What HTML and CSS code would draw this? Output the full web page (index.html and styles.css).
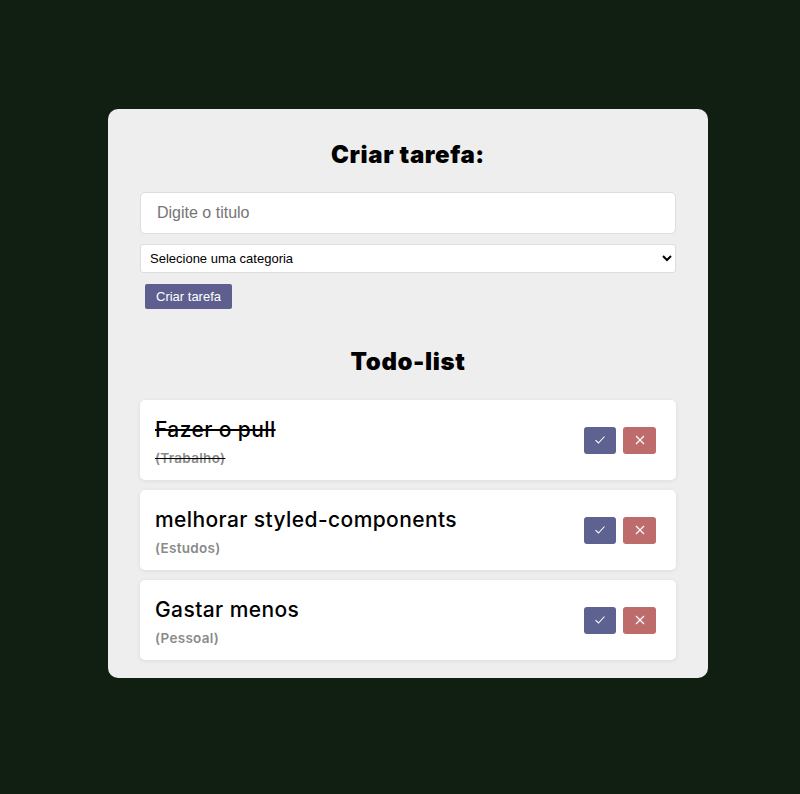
FILE: index.html
```html
<!DOCTYPE html>
<html lang="pt">
<head>
<meta charset="utf-8">
<title>Todo-list</title>
<link rel="stylesheet" href="styles.css">
</head>
<body>
<main class="card">
  <h2 class="title">Criar tarefa:</h2>
  <form class="form">
    <input class="input" type="text" placeholder="Digite o titulo">
    <select class="select">
      <option>Selecione uma categoria</option>
    </select>
    <div class="btn-row"><button type="button" class="create">Criar tarefa</button></div>
  </form>
  <h2 class="title list-title">Todo-list</h2>
  <ul class="list">
    <li class="item done">
      <div class="info">
        <p class="name">Fazer o pull</p>
        <p class="cat">(Trabalho)</p>
      </div>
      <div class="actions">
        <button class="act check" type="button"><svg width="12" height="10" viewBox="0 0 12 10"><path d="M1.5 5.2 L4.5 8 L10.5 1.5" fill="none" stroke="#fff" stroke-width="1.1"/></svg></button>
        <button class="act del" type="button"><svg width="10" height="10" viewBox="0 0 10 10"><path d="M1 1 L9 9 M9 1 L1 9" fill="none" stroke="#fff" stroke-width="1.2"/></svg></button>
      </div>
    </li>
    <li class="item">
      <div class="info">
        <p class="name">melhorar styled-components</p>
        <p class="cat">(Estudos)</p>
      </div>
      <div class="actions">
        <button class="act check" type="button"><svg width="12" height="10" viewBox="0 0 12 10"><path d="M1.5 5.2 L4.5 8 L10.5 1.5" fill="none" stroke="#fff" stroke-width="1.1"/></svg></button>
        <button class="act del" type="button"><svg width="10" height="10" viewBox="0 0 10 10"><path d="M1 1 L9 9 M9 1 L1 9" fill="none" stroke="#fff" stroke-width="1.2"/></svg></button>
      </div>
    </li>
    <li class="item">
      <div class="info">
        <p class="name">Gastar menos</p>
        <p class="cat">(Pessoal)</p>
      </div>
      <div class="actions">
        <button class="act check" type="button"><svg width="12" height="10" viewBox="0 0 12 10"><path d="M1.5 5.2 L4.5 8 L10.5 1.5" fill="none" stroke="#fff" stroke-width="1.1"/></svg></button>
        <button class="act del" type="button"><svg width="10" height="10" viewBox="0 0 10 10"><path d="M1 1 L9 9 M9 1 L1 9" fill="none" stroke="#fff" stroke-width="1.2"/></svg></button>
      </div>
    </li>
  </ul>
</main>
</body>
</html>
```

FILE: styles.css
```css
* { box-sizing: border-box; }
html, body { margin: 0; padding: 0; }
body {
  background: #111f12;
  min-height: 794px;
  font-family: "Inter", "Noto Sans", sans-serif;
  padding: 109px 0 0 16px;
}
.card {
  width: 600px;
  margin: 0 auto;
  background: #eeeeee;
  border-radius: 10px;
  padding: 31px 32px 18px;
}
.title {
  margin: 0;
  text-align: center;
  font-size: 24px;
  font-weight: 900;
  line-height: 30px;
  color: #000;
  letter-spacing: 0.6px;
}
.form {
  margin-top: 22px;
  display: flex;
  flex-direction: column;
}
.input {
  height: 42px;
  border: 1px solid #dddddd;
  border-radius: 5px;
  background: #fff;
  padding: 0 16px;
  font-family: "Liberation Sans", Arial, sans-serif;
  font-size: 16px;
  color: #000;
}
.input::placeholder { color: #757575; }
.select {
  margin-top: 10px;
  height: 29px;
  border: 1px solid #dddddd;
  border-radius: 3px;
  background: #fff;
  font-family: "Liberation Sans", Arial, sans-serif;
  font-size: 13px;
  color: #000;
  padding: 0 5px;
}
.btn-row {
  margin-top: 11px;
  padding-left: 5px;
}
.create {
  height: 25px;
  padding: 0 11px;
  border: none;
  border-radius: 2px;
  background: #5e5f8f;
  color: #fff;
  font-family: "Liberation Sans", Arial, sans-serif;
  font-size: 13px;
  cursor: pointer;
}
.list-title { margin-top: 38px; }
.list {
  list-style: none;
  margin: 23px 0 0;
  padding: 0;
  display: flex;
  flex-direction: column;
  gap: 10px;
}
.item {
  height: 80px;
  background: #fff;
  border-radius: 5px;
  box-shadow: 0 1px 4px rgba(0,0,0,0.08);
  display: flex;
  align-items: center;
  justify-content: space-between;
  padding: 0 20px 0 15px;
}
.info { display: flex; flex-direction: column; padding-top: 4px; }
.name {
  margin: 0;
  font-size: 21px;
  font-weight: 500;
  line-height: 26px;
  letter-spacing: 0.4px;
  color: #000;
}
.cat {
  margin: 6px 0 0;
  font-size: 13.5px;
  font-weight: 600;
  line-height: 18px;
  letter-spacing: 0.3px;
  color: #8a8a8a;
}
.done .name, .done .cat { text-decoration: line-through; text-decoration-color: #000; }
.actions { display: flex; gap: 7px; margin-top: 0; }
.act {
  width: 33px;
  height: 27px;
  border: none;
  border-radius: 3px;
  display: flex;
  align-items: center;
  justify-content: center;
  padding: 0;
  cursor: pointer;
}
.check { background: #5e6290; width: 32px; }
.del { background: #bd6b6b; }
```
